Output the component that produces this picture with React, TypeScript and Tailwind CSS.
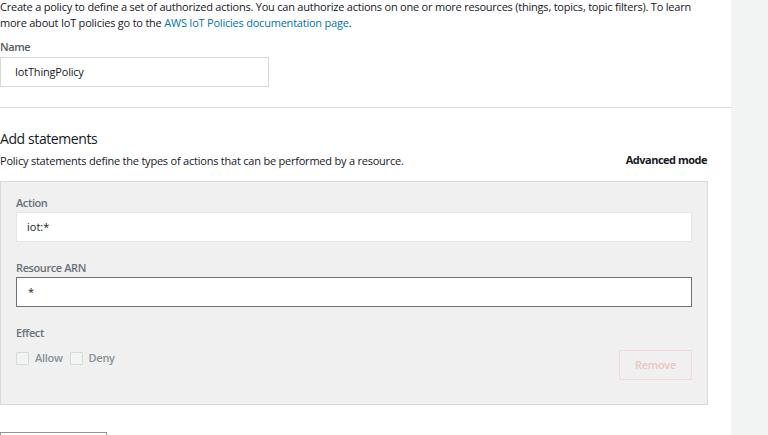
import React from "react";

function Label({ children }: { children: React.ReactNode }) {
  return <div className="text-[11px] leading-[18px] font-semibold tracking-[-0.4px] text-[#687078]">{children}</div>;
}

function Checkbox({ label }: { label: string }) {
  return (
    <label className="flex items-center">
      <span className="w-[13px] h-[13px] border border-[#d5dbdb] bg-[#f2f3f3] rounded-[1px]" />
      <span className="ml-[6px] text-[11px] font-semibold tracking-[-0.3px] text-[#879196]">{label}</span>
    </label>
  );
}

export default function App() {
  return (
    <div className="flex h-[435px] overflow-hidden bg-white text-[#16191f]" style={{ fontFamily: "'Open Sans', 'Noto Sans', sans-serif" }}>
      <div className="w-[731px] shrink-0">
        <p className="w-[700px] text-[11px] leading-[16px] tracking-[-0.22px] -mt-[1px]">
          Create a policy to define a set of authorized actions. You can authorize actions on one or more resources (things, topics, topic filters). To learn more about IoT policies go to the{" "}
          <a className="text-[#0073bb]">AWS IoT Policies documentation page</a>.
        </p>

        <div className="mt-[7px]">
          <Label>
            <span className="text-[#545b64]">Name</span>
          </Label>
          <div className="mt-[1px] w-[269px] h-[30px] border border-[#d5dbdb] bg-white flex items-center pl-[14px] text-[11px] tracking-[-0.2px]">
            IotThingPolicy
          </div>
        </div>

        <div className="mt-[20px] h-px bg-[#d5dbdb]" />

        <div className="w-[708px]">
          <h2 className="mt-[19px] text-[14px] leading-[24px] tracking-[-0.4px] text-[#16191f]">Add statements</h2>
          <div className="mt-[2px] flex items-center justify-between text-[11px] leading-[16px] tracking-[-0.22px]">
            <span>Policy statements define the types of actions that can be performed by a resource.</span>
            <span className="font-bold tracking-[-0.5px] text-[#16191f] -mt-[2px] pr-[1px]">Advanced mode</span>
          </div>

          <div className="mt-[12px] border border-[#d5dbdb] bg-[#f0f0f0] px-[15px] pt-[12px] pb-[24px]">
            <Label>Action</Label>
            <div className="w-full h-[30px] border border-[#e4e6e6] bg-white flex items-center pl-[10px] text-[11px]">iot:*</div>

            <div className="mt-[17px]">
              <Label>Resource ARN</Label>
              <div className="w-full h-[30px] border border-[#687078] bg-white flex items-center pl-[11px] text-[11px]">*</div>
            </div>

            <div className="mt-[17px]">
              <Label>Effect</Label>
              <div className="mt-[8px] flex items-start justify-between">
                <div className="flex items-center gap-[7px]">
                  <Checkbox label="Allow" />
                  <Checkbox label="Deny" />
                </div>
                <button className="w-[73px] h-[30px] border border-[#f4d9d6] text-[11px] font-semibold tracking-[-0.3px] text-[#eec4c0] bg-transparent">
                  Remove
                </button>
              </div>
            </div>
          </div>
        </div>

        <div className="mt-[27px] w-[107px] h-[30px] border border-[#8d9596] bg-white" />
      </div>
      <div className="flex-1 bg-[#f2f3f3]" />
    </div>
  );
}
